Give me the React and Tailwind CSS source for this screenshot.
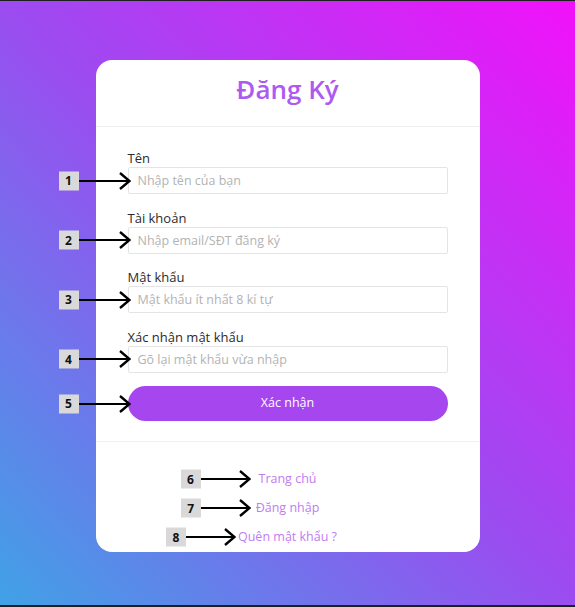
import React from "react";

function Arrow({ w = 52 }) {
  return (
    <svg width={w} height="19" viewBox={`0 0 ${w} 19`} className="block shrink-0">
      <line x1="0" y1="9.5" x2={w - 1.5} y2="9.5" stroke="#000" strokeWidth="2.2" />
      <polyline
        points={`${w - 11},1.5 ${w - 1.5},9.5 ${w - 11},17.5`}
        fill="none"
        stroke="#000"
        strokeWidth="2.4"
        strokeLinejoin="miter"
      />
    </svg>
  );
}

function Badge({ n }) {
  return (
    <div className="w-[20px] h-[19px] shrink-0 bg-[#d9d9d9] flex items-center justify-center text-[12px] font-bold text-[#111] leading-none">
      {n}
    </div>
  );
}

function Field({ label, placeholder, n }) {
  return (
    <div className="flex flex-col">
      <label className="text-[13px] leading-[18px] font-medium text-[#2b2b2b]">{label}</label>
      <div className="relative">
        <input
          className="w-full h-[27px] border border-[#e4e4e4] rounded-[2px] px-[9px] text-[12.5px] outline-none placeholder:text-[#b3b3b3] bg-white"
          placeholder={placeholder}
        />
        <div className="absolute left-[-69px] top-1/2 -translate-y-1/2 flex items-center">
          <Badge n={n} />
          <Arrow w={52} />
        </div>
      </div>
    </div>
  );
}

function LinkRow({ text, n, gap }) {
  return (
    <div className="h-[29px] flex items-center justify-center">
      <span className="relative text-[12.5px] text-[#c17cf2]">
        {text}
        <span
          className="absolute right-full top-1/2 -translate-y-1/2 flex items-center"
          style={{ marginRight: gap }}
        >
          <Badge n={n} />
          <Arrow w={50} />
        </span>
      </span>
    </div>
  );
}

export default function App() {
  return (
    <div
      className="w-full h-[607px] border-t border-b-2 border-[#1f1f1f] bg-[linear-gradient(to_top_right,#40a2e6,#9b4cf0,#f211fa)] pt-[59px]"
      style={{ fontFamily: '"Open Sans", "Noto Sans", sans-serif' }}
    >
      <div className="mx-auto w-[384px] bg-white rounded-[16px] flex flex-col">
        <div className="shrink-0 h-[67px] border-b border-[#eeeeee] flex items-center justify-center pb-[8px]">
          <h1 className="text-[26px] font-semibold text-[#ad5af0] leading-none">Đăng Ký</h1>
        </div>
        <div className="shrink-0 px-[32px] pt-[22px] pb-[20px] border-b border-[#f0f0f0] flex flex-col gap-[14.5px]">
          <Field label="Tên" placeholder="Nhập tên của bạn" n="1" />
          <Field label="Tài khoản" placeholder="Nhập email/SĐT đăng ký" n="2" />
          <Field label="Mật khẩu" placeholder="Mật khẩu ít nhất 8 kí tự" n="3" />
          <Field label="Xác nhận mật khẩu" placeholder="Gõ lại mật khẩu vừa nhập" n="4" />
          <div className="relative mt-[-1px]">
            <button className="w-full h-[35px] rounded-full bg-[#a546ee] text-white text-[12.5px]">
              Xác nhận
            </button>
            <div className="absolute left-[-69px] top-1/2 -translate-y-1/2 flex items-center">
              <Badge n="5" />
              <Arrow w={52} />
            </div>
          </div>
        </div>
        <div className="shrink-0 pt-[22.5px] flex flex-col">
          <LinkRow text="Trang chủ" n="6" gap={8} />
          <LinkRow text="Đăng nhập" n="7" gap={5} />
          <LinkRow text="Quên mật khẩu ?" n="8" gap={2} />
        </div>
      </div>
    </div>
  );
}
